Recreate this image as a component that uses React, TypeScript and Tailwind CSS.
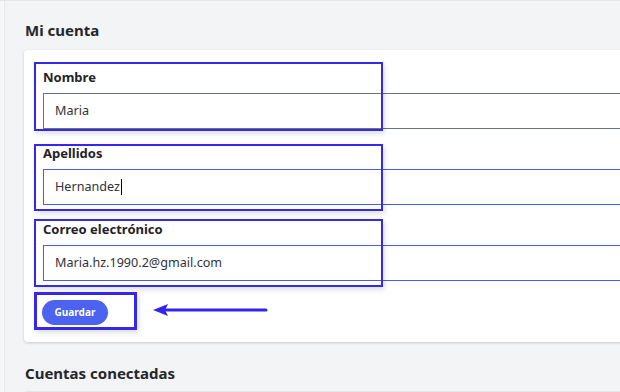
import React from "react";

const fields = [
  { label: "Nombre", value: "Maria", focus: false, caret: false, box: "top-[-5px] bottom-[-2px]" },
  { label: "Apellidos", value: "Hernandez", focus: true, caret: true, box: "top-[1px] bottom-[-6px]" },
  { label: "Correo electrónico", value: "Maria.hz.1990.2@gmail.com", focus: true, caret: false, box: "top-0 bottom-[-6px]" },
];

export default function App() {
  return (
    <div
      className="w-[620px] h-[392px] overflow-hidden flex bg-[#f3f4f6] border-t border-[#e4e6ea]"
      style={{ fontFamily: '"Noto Sans", "Open Sans", sans-serif' }}
    >
      {/* side strip */}
      <div className="w-[5px] shrink-0 bg-[#f7f8fa] border-r border-[#e8eaee]" />

      <div className="pl-[19px] shrink-0">
        {/* MI CUENTA */}
        <h2 className="mt-[19px] pl-[1px] text-[15px] leading-5 font-bold text-[#24272b]">
          Mi cuenta
        </h2>

        <div className="mt-[10px] w-[660px] bg-white rounded-[4px] shadow-[0_1px_3px_rgba(0,0,0,0.18)] pl-[19px] pr-6 pt-[17px] pb-[19px]">
          <div className="flex flex-col gap-[14px]">
            {fields.map((f) => (
              <div key={f.label} className="relative">
                <div className="h-5 text-[13px] leading-5 font-bold text-[#1f2328]">
                  {f.label}
                </div>
                <div
                  className={
                    "mt-[6px] h-9 flex items-center pl-[11px] border text-[12.6px] text-[#2f3337] " +
                    (f.focus ? "border-[#4a5ce8]" : "border-[#6b737b]")
                  }
                >
                  {f.value}
                  {f.caret && <span className="ml-px w-px h-[16px] bg-black" />}
                </div>
                {/* annotation box */}
                <div
                  className={
                    "absolute left-[-9px] w-[349px] border-2 border-[#3428ee] shadow-[2px_3px_5px_rgba(0,0,0,0.12)] " +
                    f.box
                  }
                />
              </div>
            ))}
          </div>

          {/* SAVE */}
          <div className="relative mt-[17px] h-[25px]">
            <button className="h-[25px] w-[66px] -ml-px rounded-full bg-[#4b63ef] text-white text-[10px] font-bold">
              Guardar
            </button>
            <div className="absolute left-[-9px] top-[-6px] w-[103px] h-[38px] border-[3px] border-[#3428ee] shadow-[2px_3px_5px_rgba(0,0,0,0.12)]" />
            <svg
              className="absolute left-[109px] top-[4px]"
              width="118"
              height="16"
              viewBox="0 0 118 16"
            >
              <line x1="10" y1="8" x2="114" y2="8" stroke="#3325ee" strokeWidth="3" strokeLinecap="round" />
              <polygon points="1,8 16,2 13,8 16,14" fill="#3325ee" />
            </svg>
          </div>
        </div>

        {/* CUENTAS CONECTADAS */}
        <h2 className="mt-[21px] pl-[1px] text-[15px] leading-5 font-bold text-[#24272b]">
          Cuentas conectadas
        </h2>
        <div className="mt-[8px] w-[660px] h-10 bg-white rounded-[4px] border-t border-[#e6e8eb]" />
      </div>
    </div>
  );
}
